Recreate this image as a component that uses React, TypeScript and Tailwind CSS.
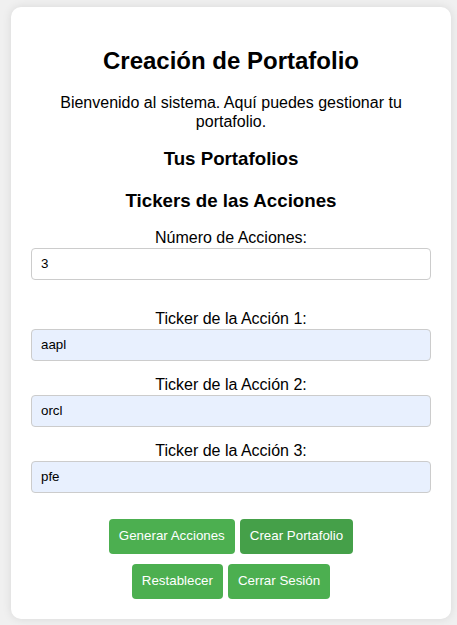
import * as React from "react"

const tickers = ["aapl", "orcl", "pfe"]

function Btn({ children, dark }: { children: React.ReactNode; dark?: boolean }) {
  return (
    <button
      type="button"
      className={
        "h-[35px] rounded-[4px] px-[10px] text-[13.33px] leading-[16px] text-white " +
        (dark ? "bg-[#45a049]" : "bg-[#4caf50]")
      }
    >
      {children}
    </button>
  )
}

export default function App() {
  return (
    <div className="min-h-screen bg-[#f0f0f0] pl-[11px] pt-[7px] font-['Liberation_Sans',Arial,sans-serif] text-black">
      <div className="w-[440px] rounded-[10px] bg-white p-5 text-center shadow-[0_0_10px_rgba(0,0,0,0.1)]">
        <h2 className="mt-5 text-[24px] font-bold leading-[27.6px]">Creación de Portafolio</h2>
        <p className="mt-[19.5px] text-[16px] leading-[18.4px]">
          Bienvenido al sistema. Aquí puedes gestionar tu portafolio.
        </p>
        <h3 className="mt-[17.5px] text-[18.72px] font-bold leading-[21.5px]">Tus Portafolios</h3>
        <h3 className="mt-[20.5px] text-[18.72px] font-bold leading-[21.5px]">Tickers de las Acciones</h3>

        <label className="mt-[17.2px] block text-[16px] leading-[18.4px]">Número de Acciones:</label>
        <input
          readOnly
          value="3"
          className="block h-8 w-full rounded-[4px] border border-[#ccc] bg-white px-[9px] text-[13.33px] outline-none"
        />

        <div className="mt-[30px]">
          {tickers.map((t, i) => (
            <div key={t} className={i > 0 ? "mt-[15px]" : ""}>
              <label className="block text-[16px] leading-[18.4px]">Ticker de la Acción {i + 1}:</label>
              <input
                readOnly
                value={t}
                className="mt-[0.6px] block h-8 w-full rounded-[4px] border border-[#ccc] bg-[#e8f0fe] px-[9px] text-[13.33px] outline-none"
              />
            </div>
          ))}
        </div>

        <div className="mt-[26px] flex justify-center gap-[5px]">
          <Btn>Generar Acciones</Btn>
          <Btn dark>Crear Portafolio</Btn>
        </div>
        <div className="mt-[10px] flex justify-center gap-[5px]">
          <Btn>Restablecer</Btn>
          <Btn>Cerrar Sesión</Btn>
        </div>
      </div>
    </div>
  )
}
